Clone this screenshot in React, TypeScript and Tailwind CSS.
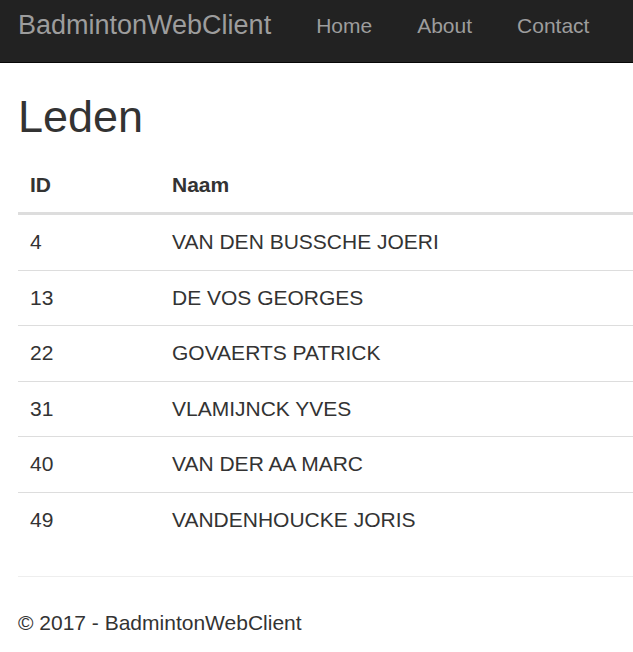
import React from "react";

const rows: [string, string][] = [
  ["4", "VAN DEN BUSSCHE JOERI"],
  ["13", "DE VOS GEORGES"],
  ["22", "GOVAERTS PATRICK"],
  ["31", "VLAMIJNCK YVES"],
  ["40", "VAN DER AA MARC"],
  ["49", "VANDENHOUCKE JORIS"],
];

export default function App() {
  return (
    <div className="min-h-[652px] bg-white font-['Liberation_Sans',Arial,sans-serif] text-[#333]">
      <nav className="flex h-[63px] items-start border-b border-[#080808] bg-[#222]">
        <a className="pl-[18px] pt-[10px] text-[27px] leading-[30px] text-[#9d9d9d]">BadmintonWebClient</a>
        <ul className="ml-[22.5px] flex">
          {["Home", "About", "Contact"].map((l) => (
            <li key={l}>
              <a className="block px-[22.5px] pt-[14px] text-[21px] leading-[24px] text-[#9d9d9d]">{l}</a>
            </li>
          ))}
        </ul>
      </nav>
      <div className="pl-[18px]">
        <h2 className="mb-[16.5px] mt-[29px] text-[45px] font-normal leading-[49.5px]">Leden</h2>
        <table className="mb-[28.5px] w-full border-collapse text-left text-[21px] leading-[30px]">
          <thead>
            <tr>
              <th className="w-[142px] border-b-[3px] border-[#ddd] px-[12px] py-[12px] font-bold">ID</th>
              <th className="border-b-[3px] border-[#ddd] px-[12px] py-[12px] font-bold">Naam</th>
            </tr>
          </thead>
          <tbody>
            {rows.map(([id, naam]) => (
              <tr key={id}>
                <td className="border-t border-[#ddd] px-[12px] pb-[12px] pt-[12px] leading-[30.5px]">{id}</td>
                <td className="border-t border-[#ddd] px-[12px] pb-[12px] pt-[12px] leading-[30.5px]">{naam}</td>
              </tr>
            ))}
          </tbody>
        </table>
        <hr className="mb-[31px] border-t border-[#eee]" />
        <footer>
          <p className="text-[21px] leading-[30px]">© 2017 - BadmintonWebClient</p>
        </footer>
      </div>
    </div>
  );
}
